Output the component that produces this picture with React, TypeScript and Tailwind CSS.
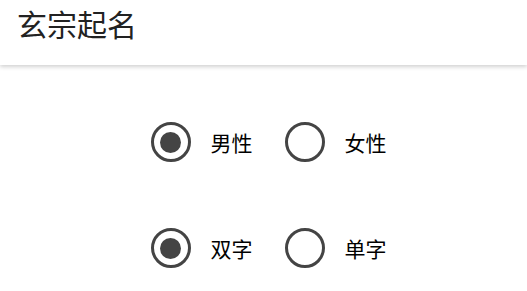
import { useState } from 'react';

type Option = { value: string; label: string };

const Radio = ({ checked, label, onClick }: { checked: boolean; label: string; onClick: () => void }) => (
  <button type="button" onClick={onClick} className="flex items-center gap-[20px]">
    <span className="flex h-[40px] w-[40px] items-center justify-center rounded-full border-[3px] border-[#444444]">
      {checked && <span className="h-[21px] w-[21px] rounded-full bg-[#444444]" />}
    </span>
    <span className="text-[21px] leading-none text-black">{label}</span>
  </button>
);

const Group = ({ options, initial }: { options: Option[]; initial: string }) => {
  const [value, setValue] = useState(initial);
  return (
    <div className="flex justify-center gap-[32px] pl-[10px]">
      {options.map((o) => (
        <Radio key={o.value} checked={value === o.value} label={o.label} onClick={() => setValue(o.value)} />
      ))}
    </div>
  );
};

export default function App() {
  return (
    <main className="min-h-screen bg-white" style={{ fontFamily: '"Noto Sans CJK SC", "Noto Sans", sans-serif' }}>
      <header className="flex h-[65px] items-start bg-white px-[17px] pt-[5px] shadow-[0_2px_4px_rgba(0,0,0,0.18)]">
        <h1 className="text-[30px] leading-[36px] text-[#222222]">玄宗起名</h1>
      </header>
      <div className="flex flex-col gap-[66px] pt-[57px]">
        <Group
          initial="male"
          options={[
            { value: 'male', label: '男性' },
            { value: 'female', label: '女性' },
          ]}
        />
        <Group
          initial="double"
          options={[
            { value: 'double', label: '双字' },
            { value: 'single', label: '单字' },
          ]}
        />
      </div>
    </main>
  );
}
